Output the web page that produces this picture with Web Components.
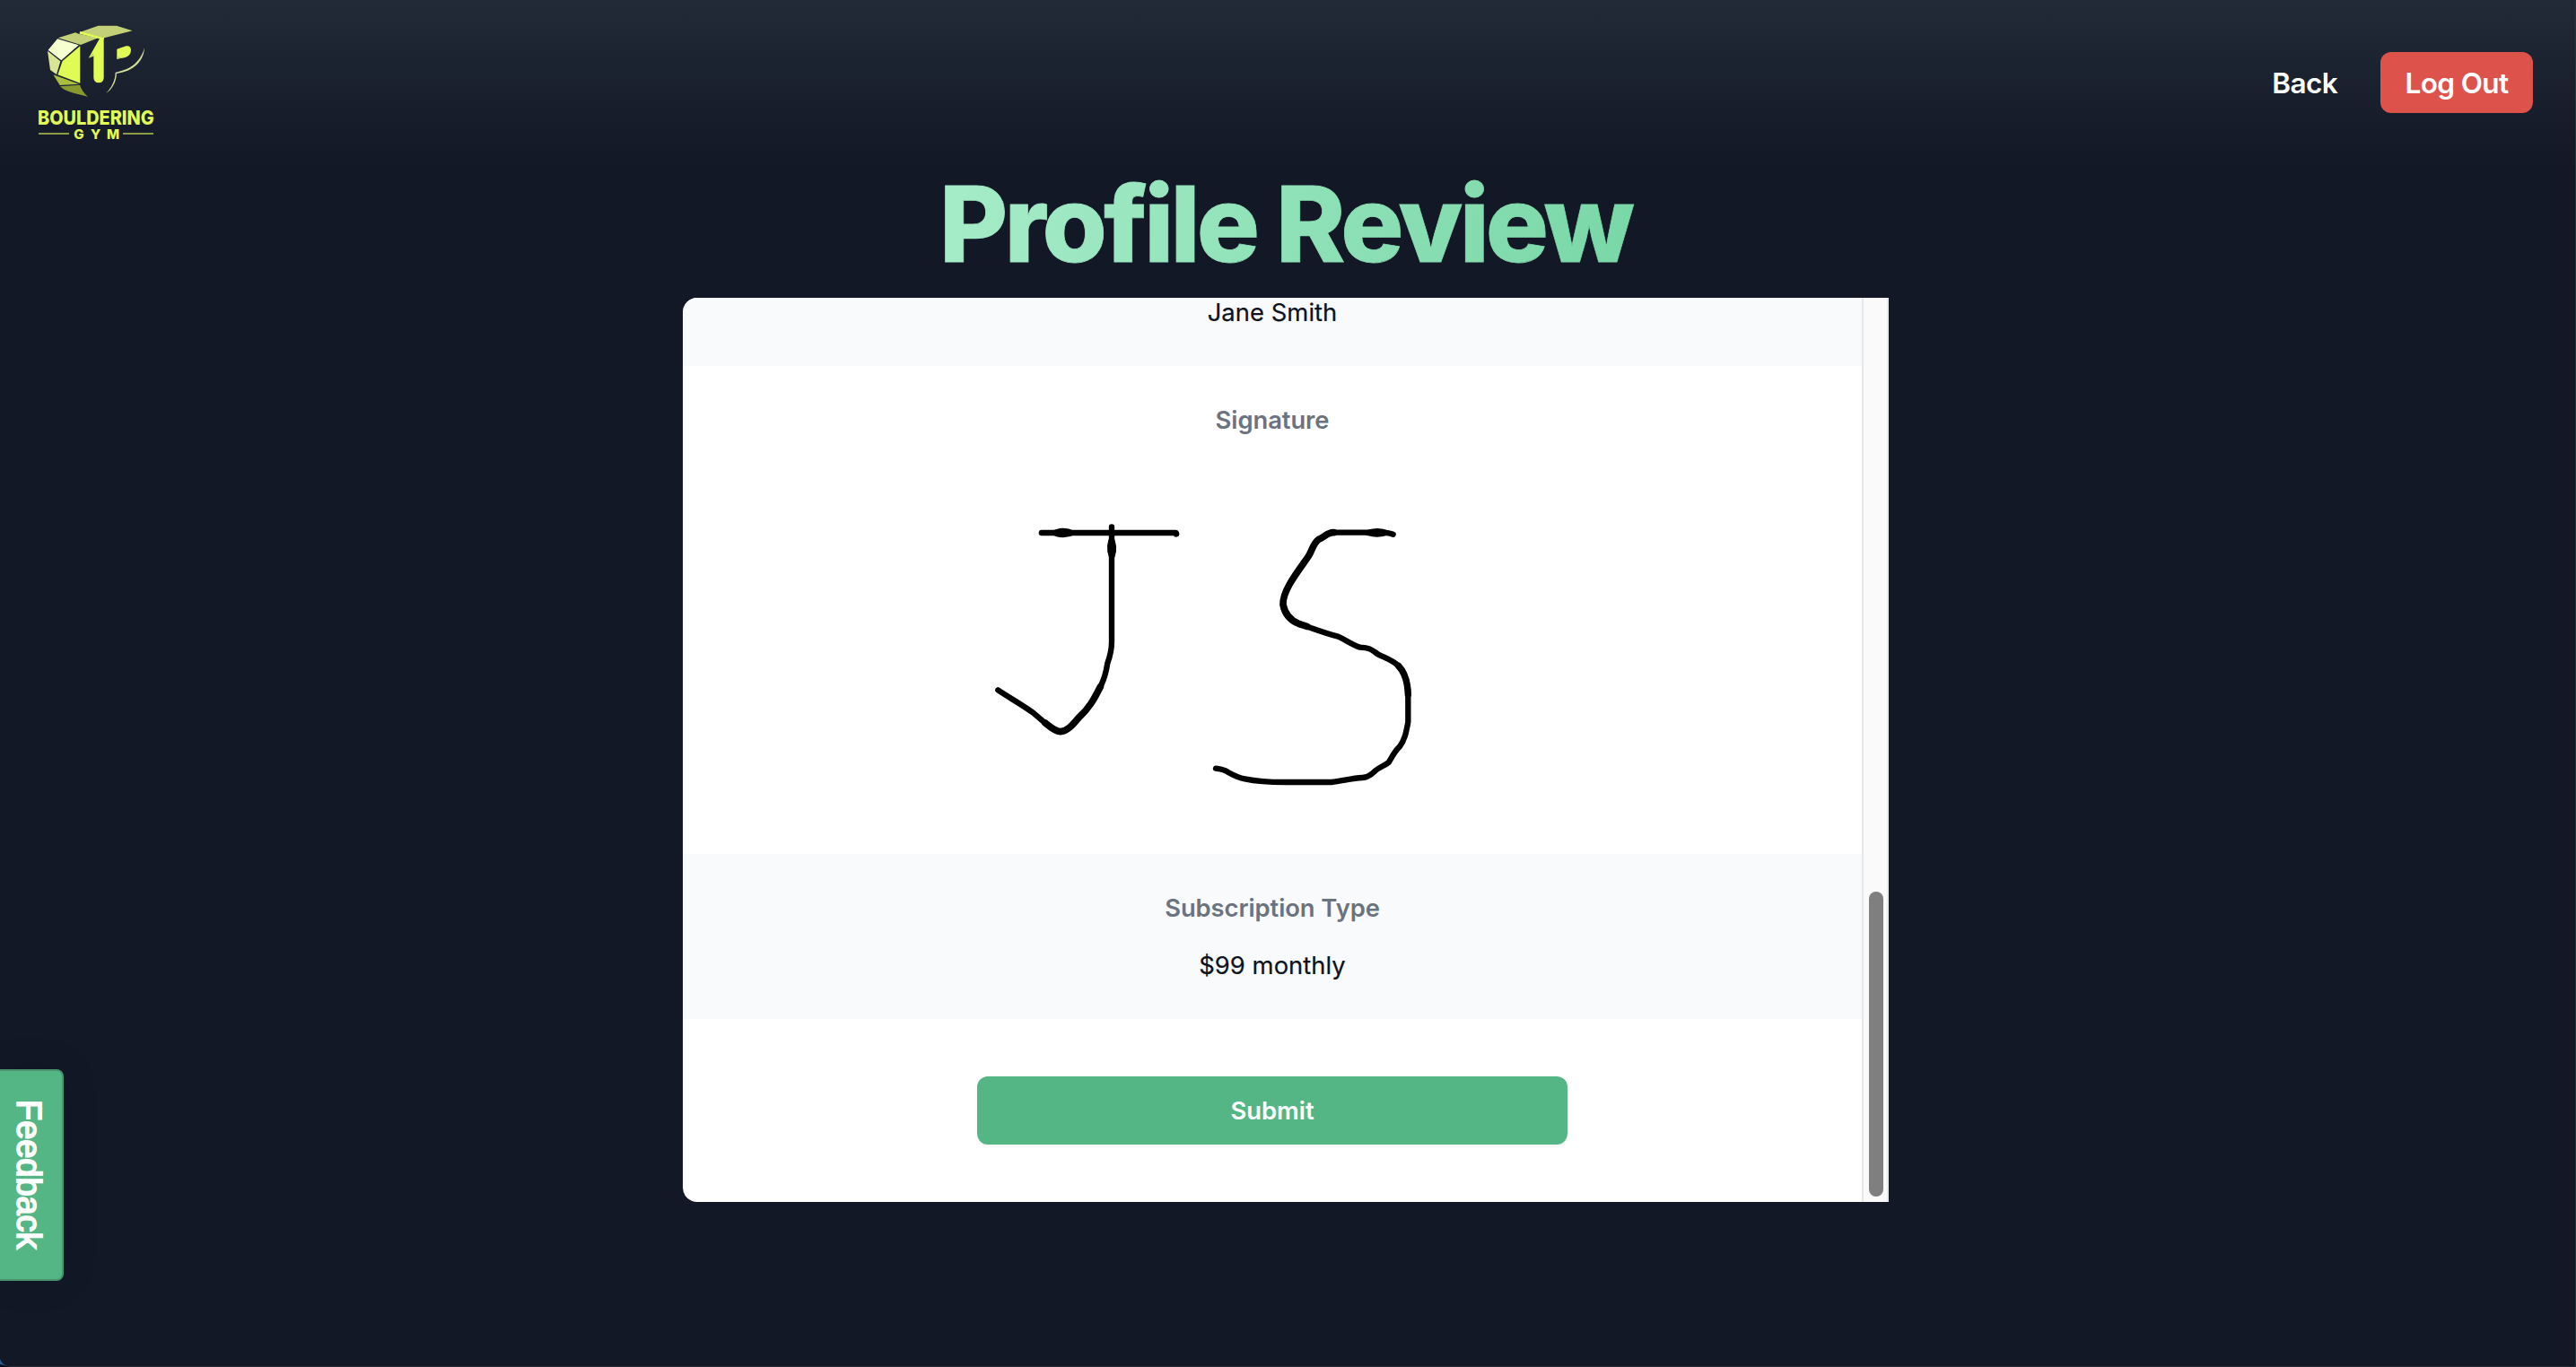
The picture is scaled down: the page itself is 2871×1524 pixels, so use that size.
<!DOCTYPE html>
<html lang="en">
<head>
<meta charset="utf-8">
<title>Profile Review</title>
<style>
html,body{margin:0;height:100%;overflow:hidden}
body{background:#121826;font-family:Inter,"Liberation Sans",sans-serif;color:#121826}
</style>
</head>
<body>
<gym-page>
  <gym-header slot="header">
    <gym-logo slot="brand"></gym-logo>
    <gym-button variant="link">Back</gym-button>
    <gym-button variant="danger">Log Out</gym-button>
  </gym-header>
  <page-title>Profile Review</page-title>
  <review-card>
    <review-row tail tinted>Jane Smith</review-row>
    <review-row label="Signature" signed><signature-image></signature-image></review-row>
    <review-row label="Subscription Type" tinted>$99 monthly</review-row>
    <gym-button variant="primary">Submit</gym-button>
  </review-card>
  <feedback-tab slot="overlay">Feedback</feedback-tab>
</gym-page>
<script>
const define = (name, html) => customElements.define(name, class extends HTMLElement {
  constructor() {
    super();
    this.attachShadow({ mode: 'open' }).innerHTML = html;
  }
});

define('gym-page', `
<style>
:host{display:flex;flex-direction:column;position:relative;box-sizing:border-box;height:1524px;overflow:hidden;
  background:linear-gradient(#232a37,#121826) 0 0/100% 184px no-repeat #121826}
main{display:flex;flex-direction:column;align-items:center}
.edge{position:absolute;top:0;right:0;bottom:0;width:1px;background:#26363f}
.base{position:absolute;left:0;right:0;bottom:0;height:1px;background:#292d38}
.corner{position:absolute;left:0;bottom:0;display:block}
</style>
<slot name="header"></slot>
<main><slot></slot></main>
<slot name="overlay"></slot>
<div class="edge"></div><div class="base"></div>
<svg class="corner" width="14" height="10"><path d="M0 0Q1.5 7.500 12 10H0Z" fill="#1d2a36"/><path d="M0 1Q1.500 6.500 7 9L0 9Z" fill="#275b93"/><path d="M0 7L9 9.500V10H0Z" fill="#070a10"/></svg>`);

define('gym-header', `
<style>
:host{display:flex;box-sizing:border-box;height:166px;justify-content:space-between;align-items:flex-start;padding:0 48px 0 20px;flex:none}
.brand{padding-top:10px;height:156px}
nav{display:flex;gap:48px;padding-top:58px}
</style>
<div class="brand"><slot name="brand"></slot></div>
<nav><slot></slot></nav>`);

define('gym-logo', `
<style>:host{display:block}svg{display:block}text{font-family:Inter,"Liberation Sans",sans-serif;font-weight:800;fill:#e0fb55}</style>
<svg width="180" height="156" viewBox="0 0 540 468">
<path d="M134 97L192 79L203 83L268 97L210 120Z" fill="#c3d078"/>
<path d="M208 77L268 56H330L383 73L288 97Z" fill="#c3d078"/>
<path d="M207 75L288 96V101L270 99L206 83Z" fill="#e0fb55"/>
<path d="M132 100L203 121L145 172L101 137Z" fill="#f6ffd0"/>
<path d="M99 140L142 175L129 219L108 204Z" fill="#d8e595"/>
<path d="M208 124V248L133 220L149 174Z" fill="#e0fb55"/>
<path d="M118 220L205 251L140 255Z" fill="#a9bd41"/>
<path d="M141 259L207 254Q214 276 234 293L186 281Q151 272 141 259Z" fill="#87992f"/>
<path d="M273 99H287V230Q286 247 270 247Q254 246 253 230V157L237 163Z" fill="#e0fb55"/>
<path d="M236 164L251 147L253 158Z" fill="#c3d078"/>
<path d="M331 134L362 124Q378 122 378 138Q377 157 359 162L331 167Z" fill="#e0fb55"/>
<path d="M331 158Q345 164 359 162L331 167Z" fill="#c3d078"/>
<path d="M423 130C421 172 389 209 330 216C328 246 315 269 294 282C313 263 325 240 326 212C382 203 412 171 423 130Z" fill="#d3df9a"/>
<text x="66" y="387" font-size="66" textLength="389" lengthAdjust="spacingAndGlyphs">BOULDERING</text>
<text y="434" font-size="45"><tspan x="187">G</tspan><tspan x="243">Y</tspan><tspan x="297">M</tspan></text>
<path d="M69 417H171M351 417H453" stroke="#8c9b45" stroke-width="6"/>
</svg>`);

define('gym-button', `
<style>
:host{display:block}
button{display:block;box-sizing:border-box;margin:0;border:0;padding:0;background:none;color:#fff;font:600 31.5px/69px Inter,"Liberation Sans",sans-serif;height:68px;letter-spacing:-.62px}
:host([variant=danger]) button{width:170px;background:#de524c;border-radius:12px}
:host([variant=primary]){display:flex;justify-content:center;align-items:flex-start;height:204px;box-sizing:border-box;padding-top:64px}
:host([variant=primary]) button{width:658px;height:76px;border-radius:12px;background:#55b685;font-size:27.4px;line-height:77px;letter-spacing:0;box-shadow:0 2px 4px rgba(0,0,0,.05)}
</style>
<button type="button"><slot></slot></button>`);

define('page-title', `
<style>
:host{display:block}
h1{margin:0;font:800 117px/167px Inter,"Liberation Sans",sans-serif;height:166px;letter-spacing:-3.9px;padding-right:6px;font-variant-ligatures:none;
  background:linear-gradient(97deg,#a6ecc9,#79d7a7);-webkit-background-clip:text;background-clip:text;color:transparent;-webkit-text-stroke:.8px transparent}
</style>
<h1><slot></slot></h1>`);

define('review-card', `
<style>
:host{display:flex;width:1344px;height:1008px;margin-right:5px;background:#fff;border-radius:16px 0 0 16px;overflow:hidden}
.rows{display:flex;flex-direction:column;width:1314px}
.track{display:flex;flex-direction:column;justify-content:flex-end;align-items:center;box-sizing:border-box;width:30px;padding:0 0 6px 2px;background:#fafafa;border:solid #e8e8e8;border-width:0 2px}
.thumb{width:16px;height:340px;border-radius:8px;background:#7f7f7f}
</style>
<div class="rows"><slot></slot></div>
<div class="track"><div class="thumb"></div></div>`);

customElements.define('review-row', class extends HTMLElement {
  constructor() {
    super();
    const label = this.getAttribute('label');
    this.attachShadow({ mode: 'open' }).innerHTML = `
<style>
:host{display:flex;flex-direction:column;align-items:center;box-sizing:border-box;height:184px;padding-top:40px;gap:24px;background:#fff;font-size:27.4px;line-height:40px;flex:none}
:host([tinted]){background:#f9fafc}
:host([tail]){height:76px;padding:0;line-height:32px}
:host([signed]){height:544px;gap:72px}
dt{font-weight:600;color:#6b7280;letter-spacing:-.08px}
dd{margin:0;color:#0d1320;letter-spacing:.04px;-webkit-text-stroke:.2px}
:host([signed]) dd{align-self:flex-start;padding-left:319px}
</style>${label ? `<dt>${label}</dt>` : ''}<dd><slot></slot></dd>`;
  }
});

define('signature-image', `
<style>:host,svg{display:block}</style>
<svg width="520" height="340" viewBox="0 0 1560 1020" fill="none" stroke="#000" stroke-width="20" stroke-linecap="round" stroke-linejoin="round">
<path d="M243 102H692L693 106" stroke-width="20"/>
<path d="M272 102Q310 78 352 98L354 106Q310 126 272 102Z" fill="#000" stroke-width="5"/>
<path d="M477 82V460Q478 497 463 538Q456 585 439 617C417 660 401 690 366 721C344 747 328 766 305 767C278 765 260 742 217 706C187 683 139 656 97 628" stroke-width="19"/>
<path d="M477 108Q456 145 470 182H485Q498 148 477 108Z" fill="#000" stroke-width="5"/>
<path d="M439 617C417 660 401 690 366 721C344 747 328 766 305 767C286 765 270 750 255 738" stroke-width="23"/>
<path d="M1418 107Q1398 100 1365 101H1222C1200 99 1188 117 1169 124C1149 138 1148 162 1134 182C1096 236 1048 296 1050 342C1055 370 1071 393 1102 406C1147 421 1192 439 1234 449C1259 460 1282 478 1307 485C1342 486 1347 494 1367 508C1392 521 1416 528 1436 547C1462 574 1467 609 1468 643V735C1462 765 1458 794 1439 818C1423 833 1414 852 1403 870C1388 882 1373 885 1357 899C1341 915 1331 921 1315 921C1279 923 1248 932 1211 936H1070Q980 937 922 925C903 922 883 912 865 902C851 893 837 892 825 890" stroke-width="19"/>
<path d="M1220 101C1200 99 1188 117 1169 124C1149 138 1148 162 1134 182C1096 236 1048 296 1050 342C1055 370 1071 393 1102 406L1130 415" stroke-width="23"/>
<path d="M1436 547C1462 574 1467 609 1468 643" stroke-width="22"/>
<path d="M1320 100Q1364 80 1402 97V106Q1364 123 1320 104Z" fill="#000" stroke-width="5"/>
</svg>`);

define('feedback-tab', `
<style>
:host{position:absolute;left:0;top:1192px;display:block}
button{display:block;box-sizing:border-box;writing-mode:vertical-rl;width:71px;height:236px;margin:0;padding:32px 5px 0 0;border:2px solid #49946f;border-left:0;border-radius:0 8px 8px 0;background:#55b685;color:#fff;
  font:400 38px/64px "Liberation Sans",Arial,sans-serif;-webkit-text-stroke:1.7px #fff;letter-spacing:-.05px;text-align:left;box-shadow:0 0 40px rgba(0,0,0,.12)}
</style>
<button type="button"><slot></slot></button>`);
</script>
</body>
</html>
